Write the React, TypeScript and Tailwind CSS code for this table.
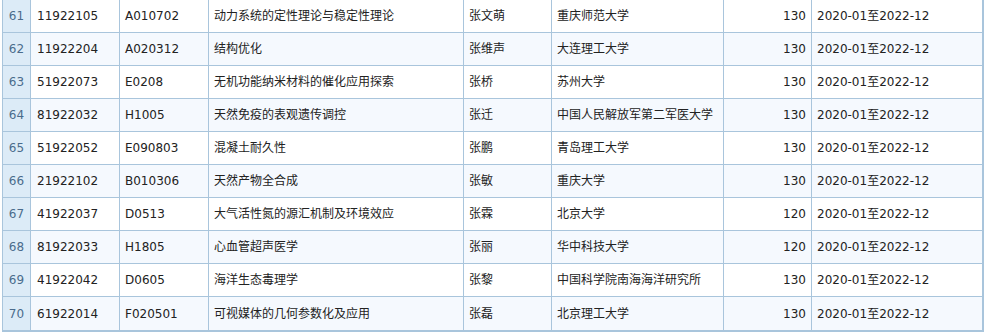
import React from "react";

type Row = [string, string, string, string, string, string, string, string];

const rows: Row[] = [
  ["61", "11922105", "A010702", "动力系统的定性理论与稳定性理论", "张文萌", "重庆师范大学", "130", "2020-01至2022-12"],
  ["62", "11922204", "A020312", "结构优化", "张维声", "大连理工大学", "130", "2020-01至2022-12"],
  ["63", "51922073", "E0208", "无机功能纳米材料的催化应用探索", "张桥", "苏州大学", "130", "2020-01至2022-12"],
  ["64", "81922032", "H1005", "天然免疫的表观遗传调控", "张迁", "中国人民解放军第二军医大学", "130", "2020-01至2022-12"],
  ["65", "51922052", "E090803", "混凝土耐久性", "张鹏", "青岛理工大学", "130", "2020-01至2022-12"],
  ["66", "21922102", "B010306", "天然产物全合成", "张敏", "重庆大学", "130", "2020-01至2022-12"],
  ["67", "41922037", "D0513", "大气活性氮的源汇机制及环境效应", "张霖", "北京大学", "120", "2020-01至2022-12"],
  ["68", "81922033", "H1805", "心血管超声医学", "张丽", "华中科技大学", "120", "2020-01至2022-12"],
  ["69", "41922042", "D0605", "海洋生态毒理学", "张黎", "中国科学院南海海洋研究所", "130", "2020-01至2022-12"],
  ["70", "61922014", "F020501", "可视媒体的几何参数化及应用", "张磊", "北京理工大学", "130", "2020-01至2022-12"],
];

export default function App() {
  return (
    <div className="w-[984px] h-[332px] bg-white overflow-hidden">
      <div
        className="ml-[2px] w-[982px] border-l border-r-2 border-b-2 border-[#a9c5dc] text-[12px] text-[#222222]"
        style={{ fontFamily: '"DejaVu Sans", "Noto Sans CJK SC", sans-serif' }}
      >
        {rows.map((r, i) => {
          const even = i % 2 === 1;
          const last = i === rows.length - 1;
          return (
            <div
              key={r[0]}
              className={`grid grid-cols-[28px_89px_89px_255px_88px_172px_88px_170px] h-[33px] ${
                last ? "" : "border-b border-[#a9c5dc]"
              } ${even ? "bg-[#f5f9fe]" : "bg-white"}`}
            >
              <div className="flex items-center justify-center border-r border-[#a9c5dc] bg-[#dcebf7] text-[#4a6b8c]">
                {r[0]}
              </div>
              <div className="flex items-center pl-[6px] border-r border-[#a9c5dc] whitespace-nowrap">{r[1]}</div>
              <div className="flex items-center pl-[5px] border-r border-[#a9c5dc] whitespace-nowrap">{r[2]}</div>
              <div className="flex items-center pl-[5px] border-r border-[#a9c5dc] whitespace-nowrap overflow-hidden">{r[3]}</div>
              <div className="flex items-center pl-[5px] border-r border-[#a9c5dc] whitespace-nowrap">{r[4]}</div>
              <div className="flex items-center pl-[5px] border-r border-[#a9c5dc] whitespace-nowrap overflow-hidden">{r[5]}</div>
              <div className="flex items-center justify-end pr-[5px] border-r border-[#a9c5dc]">{r[6]}</div>
              <div className="flex items-center pl-[5px] whitespace-nowrap">{r[7]}</div>
            </div>
          );
        })}
      </div>
    </div>
  );
}
